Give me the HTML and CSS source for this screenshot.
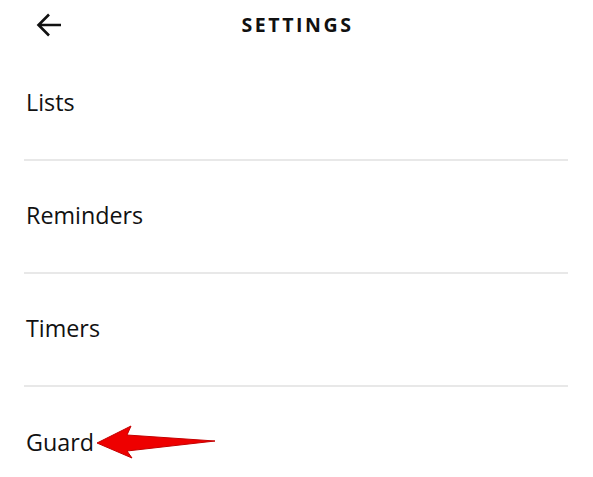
FILE: index.html
```html
<!DOCTYPE html>
<html>
<head>
<meta charset="utf-8">
<link rel="stylesheet" href="styles.css">
</head>
<body>
<div class="screen">
  <header class="header">
    <button class="back" aria-label="Back">
      <svg width="26" height="24" viewBox="0 0 26 24"><path d="M25 12H3M13 1.5L2.5 12L13 22.5" fill="none" stroke="#111" stroke-width="2.6" stroke-linejoin="miter"/></svg>
    </button>
    <h1 class="title">SETTINGS</h1>
  </header>
  <ul class="list">
    <li class="item">Lists</li>
    <li class="item">Reminders</li>
    <li class="item">Timers</li>
    <li class="item last">
      <span>Guard</span>
      <svg class="pointer" width="124" height="36" viewBox="0 0 124 36">
        <polygon points="1,18 35,1 31,10 119,16 31,26 36,33" fill="#ee0000" stroke="#c40000" stroke-width="1" stroke-linejoin="round"/>
      </svg>
    </li>
  </ul>
</div>
</body>
</html>
```
FILE: styles.css
```css
* { box-sizing: border-box; }
html, body { margin: 0; padding: 0; background: #fff; }
body { font-family: "Open Sans", "Noto Sans", sans-serif; color: #111; }
.screen { width: 593px; height: 477px; overflow: hidden; }
.header { height: 48px; display: flex; align-items: center; justify-content: center; position: relative; }
.back { position: absolute; left: 36px; top: 13px; padding: 0; border: 0; background: none; display: flex; }
.title { margin: 0 0 0 2px; font-size: 19.5px; font-weight: 700; letter-spacing: 2.6px; }
.list { list-style: none; margin: 0 25px 0 24px; padding: 0; }
.item { height: 113px; display: flex; align-items: center; padding: 0 0 4px 2px; font-size: 23.3px; border-bottom: 2px solid #e8e8e8; }
.item.last { border-bottom: 0; gap: 2px; }
.pointer { margin-top: 2px; }
```
